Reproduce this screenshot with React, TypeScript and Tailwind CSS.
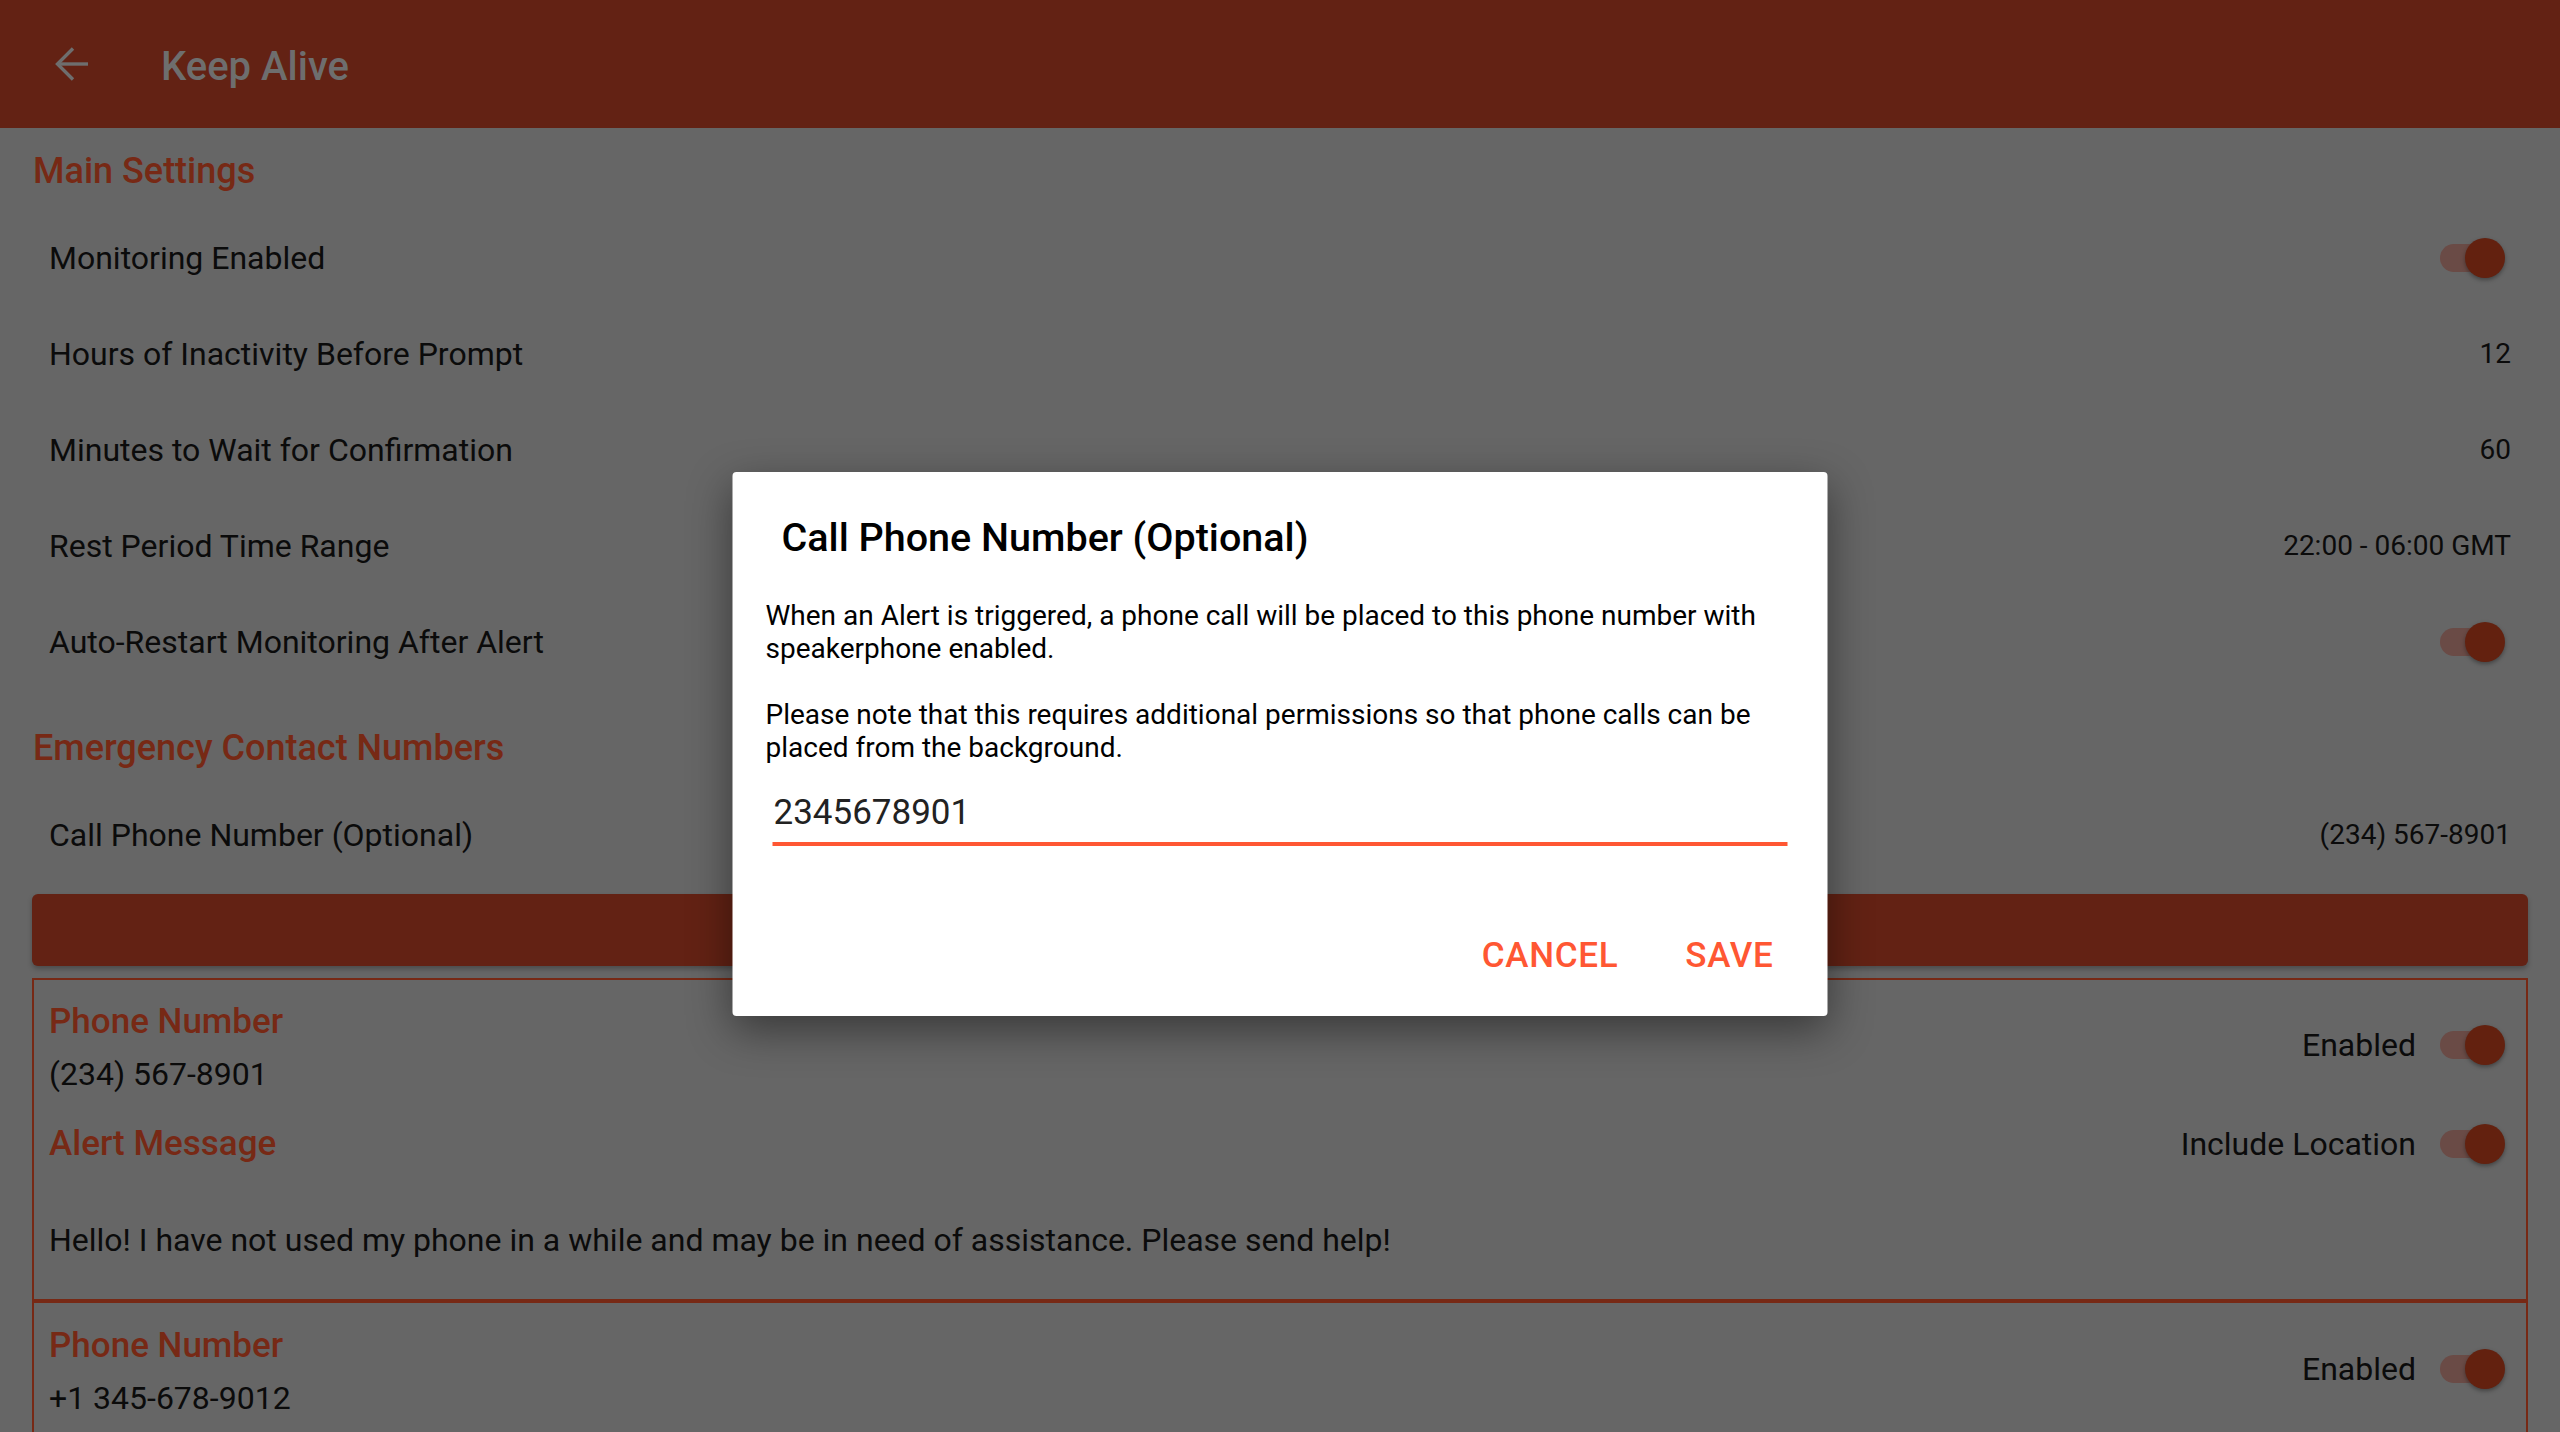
import React from "react";

const Toggle = () => (
  <div className="relative h-[40px] w-[65px] shrink-0">
    <div className="absolute left-0 top-[6px] h-[28px] w-[60px] rounded-full bg-[#6a4b46]" />
    <div className="absolute right-0 top-0 h-[40px] w-[40px] rounded-full bg-[#63210f] shadow-[0_2px_4px_rgba(0,0,0,0.35)]" />
  </div>
);

const SectionHeader = ({ title, top }: { title: string; top: string }) => (
  <div className={`${top} pb-[15px] pl-[1px]`}>
    <h2 className="text-[36px] leading-[48px] font-medium text-[#772915]">{title}</h2>
  </div>
);

const SettingRow = ({ label, value, toggle }: { label: string; value?: string; toggle?: boolean }) => (
  <div className="flex h-[96px] items-center justify-between pl-[17px] pr-[17px]">
    <span className="text-[32px] leading-[48px] text-[#0b0b0b]">{label}</span>
    {toggle ? (
      <div className="mr-[6px]">
        <Toggle />
      </div>
    ) : (
      <span className="text-[28px] leading-[40px] text-[#0b0b0b]">{value}</span>
    )}
  </div>
);

const ContactCard = ({ number, message }: { number: string; message?: string }) => (
  <div className={`border-2 border-[#772915] pl-[15px] pr-[21px] ${message ? "pt-[18px] pb-[35px]" : "pt-[19px] pb-[40px]"}`}>
    <div className="flex items-start justify-between">
      <div className="flex flex-col">
        <span className="text-[35px] leading-[48px] font-medium text-[#772915]">Phone Number</span>
        <span className="text-[32px] leading-[56px] text-[#0b0b0b]">{number}</span>
      </div>
      <div className="mt-[23px] flex h-[48px] items-center gap-[24px]">
        <span className="text-[32px] text-[#0b0b0b]">Enabled</span>
        <Toggle />
      </div>
    </div>
    {message && (
      <>
        <div className="mt-[18px] flex h-[48px] items-center justify-between">
          <span className="text-[35px] leading-[48px] font-medium text-[#772915]">Alert Message</span>
          <div className="flex items-center gap-[24px]">
            <span className="text-[32px] text-[#0b0b0b]">Include Location</span>
            <Toggle />
          </div>
        </div>
        <p className="mt-[48px] text-[32px] leading-[48px] text-[#0b0b0b]">{message}</p>
      </>
    )}
  </div>
);

const App = () => {
  return (
    <div className="relative h-screen overflow-hidden bg-[#666666] font-[family-name:Roboto,sans-serif]">
      <header className="flex h-[128px] items-center bg-[#632214]">
        <div className="ml-[49px] h-[48px] w-[48px]">
          <svg viewBox="0 0 48 48" className="h-[48px] w-[48px]" fill="none" stroke="#6e6e6e" strokeWidth="3.4">
            <path d="M39 24H9.5" />
            <path d="M24 8.5L8.5 24L24 39.5" />
          </svg>
        </div>
        <h1 className="ml-[64px] pt-[6px] text-[40px] font-medium text-[#6e6e6e]">Keep Alive</h1>
      </header>

      <main className="px-[32px]">
        <SectionHeader title="Main Settings" top="pt-[19px]" />
        <SettingRow label="Monitoring Enabled" toggle />
        <SettingRow label="Hours of Inactivity Before Prompt" value="12" />
        <SettingRow label="Minutes to Wait for Confirmation" value="60" />
        <SettingRow label="Rest Period Time Range" value="22:00 - 06:00 GMT" />
        <SettingRow label="Auto-Restart Monitoring After Alert" toggle />

        <SectionHeader title="Emergency Contact Numbers" top="pt-[34px]" />
        <SettingRow label="Call Phone Number (Optional)" value="(234) 567-8901" />

        <div className="mt-[11px] h-[72px] rounded-[6px] bg-[#632214] shadow-[0_3px_5px_rgba(0,0,0,0.25)]" />

        <div className="mt-[12px] flex flex-col">
          <ContactCard
            number="(234) 567-8901"
            message="Hello! I have not used my phone in a while and may be in need of assistance. Please send help!"
          />
          <ContactCard number="+1 345-678-9012" />
        </div>
      </main>

      <div className="absolute left-1/2 top-[472px] w-[1095px] -translate-x-1/2 rounded-[4px] bg-white shadow-[0_14px_44px_rgba(0,0,0,0.45)]">
        <h3 className="pl-[49px] pt-[40px] text-[39.5px] leading-[52px] font-medium text-black">
          Call Phone Number (Optional)
        </h3>
        <p className="mt-[35px] pl-[33px] pr-[33px] text-[28px] leading-[33px] text-black">
          When an Alert is triggered, a phone call will be placed to this phone number with speakerphone enabled.
          <br />
          <br />
          Please note that this requires additional permissions so that phone calls can be placed from the background.
        </p>
        <div className="mx-[40px] mt-[25px] border-b-4 border-[#ff5733] pb-[5px]">
          <span className="block pl-[1px] text-[35px] leading-[48px] text-[#222222]">2345678901</span>
        </div>
        <div className="mt-[86px] flex justify-end gap-[67px] pb-[36px] pr-[54px]">
          <button className="text-[35px] leading-[48px] font-medium tracking-[0.02em] text-[#ff5733]">CANCEL</button>
          <button className="text-[35px] leading-[48px] font-medium tracking-[0.02em] text-[#ff5733]">SAVE</button>
        </div>
      </div>
    </div>
  );
};

export default App;
